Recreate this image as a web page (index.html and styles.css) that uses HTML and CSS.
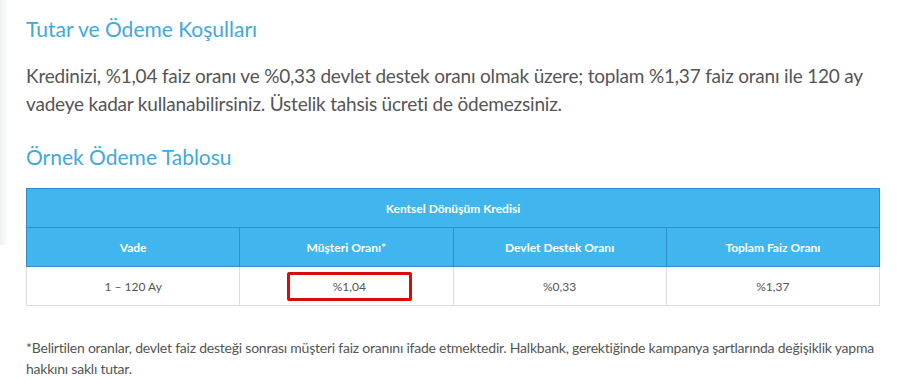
FILE: index.html
```html
<!DOCTYPE html>
<html lang="tr">
<head>
<meta charset="utf-8">
<link rel="stylesheet" href="styles.css">
</head>
<body>
<div class="page">
  <h2 class="section-title">Tutar ve Ödeme Koşulları</h2>
  <p class="lead">Kredinizi, %1,04 faiz oranı ve %0,33 devlet destek oranı olmak üzere; toplam %1,37 faiz oranı ile 120 ay vadeye kadar kullanabilirsiniz. Üstelik tahsis ücreti de ödemezsiniz.</p>
  <h2 class="section-title second">Örnek Ödeme Tablosu</h2>
  <table class="rates">
    <thead>
      <tr><th colspan="4">Kentsel Dönüşüm Kredisi</th></tr>
      <tr><th>Vade</th><th>Müşteri Oranı*</th><th>Devlet Destek Oranı</th><th>Toplam Faiz Oranı</th></tr>
    </thead>
    <tbody>
      <tr><td>1 – 120 Ay</td><td><span class="highlight">%1,04</span></td><td>%0,33</td><td>%1,37</td></tr>
    </tbody>
  </table>
  <p class="note">*Belirtilen oranlar, devlet faiz desteği sonrası müşteri faiz oranını ifade etmektedir. Halkbank, gerektiğinde kampanya şartlarında değişiklik yapma hakkını saklı tutar.</p>
</div>
</body>
</html>
```
FILE: styles.css
```css
html, body {
  margin: 0;
  padding: 0;
  background: #fff;
}
body {
  font-family: Lato, "Open Sans", sans-serif;
  color: #555;
}
.page {
  position: relative;
  padding: 14px 30px 0 26px;
  width: 854px;
  min-height: 379px;
  box-sizing: content-box;
  background-image: linear-gradient(to right, #eef1f2, #f6f7f8 4px, #fff 9px);
  background-size: 10px 245px;
  background-repeat: no-repeat;
}
.section-title {
  margin: 0;
  font-size: 21px;
  line-height: 30px;
  font-weight: 400;
  color: #42a8e0;
}
.section-title.second {
  margin-top: 24px;
}
.lead {
  margin: 18px 0 0;
  font-size: 19px;
  line-height: 28px;
  letter-spacing: -0.2px;
  color: #555;
}
.rates {
  margin-top: 16px;
  width: 854px;
  border-collapse: collapse;
  table-layout: fixed;
  font-size: 12px;
}
.rates th {
  background: #41b6ee;
  color: #fff;
  font-weight: 700;
  height: 38px;
  border: 1px solid #2d8fc6;
  padding: 0;
}
.rates td {
  height: 38px;
  border: 1px solid #dcdcdc;
  text-align: center;
  padding: 0;
  color: #555;
}
.highlight {
  display: inline-block;
  width: 119px;
  height: 23px;
  line-height: 23px;
  border: 3px solid #d80c0c;
  border-radius: 2px;
  margin-left: 6px;
}
.note {
  margin: 31px 0 0;
  font-size: 14px;
  line-height: 21px;
  letter-spacing: -0.22px;
  color: #555;
}
```
